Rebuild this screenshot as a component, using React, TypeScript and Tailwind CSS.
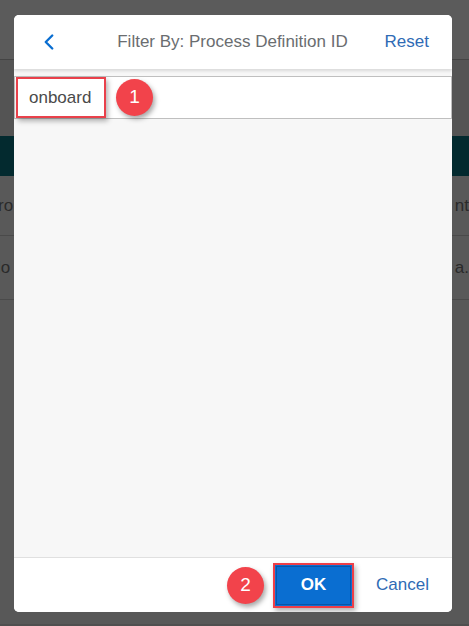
import { ChevronLeft } from 'lucide-react'

const font = { fontFamily: '"Liberation Sans", Arial, sans-serif' }

const Badge = ({ n }: { n: number }) => (
  <div className="flex h-[37px] w-[37px] items-center justify-center rounded-full bg-[#f2434b] text-[19px] text-white shadow-[2px_3px_5px_rgba(0,0,0,0.35)]">
    {n}
  </div>
)

export default function App() {
  return (
    <div className="relative h-[626px] w-[469px] overflow-hidden bg-[#4f4f4f]" style={font}>
      {/* dimmed page behind the dialog */}
      <div className="h-[60px] border-b border-[#444] bg-[#5b5b5b]" />
      <div className="h-[76px] bg-[#545454]" />
      <div className="h-[40px] bg-[#032a2f]" />
      <div className="flex h-[60px] items-center justify-between border-b border-[#4a4a4a] bg-[#595959] text-[17px] text-[#2a2a2a]">
        <span className="-ml-[2px]">ro</span>
        <span>nt</span>
      </div>
      <div className="flex h-[64px] items-center justify-between border-b border-[#4a4a4a] bg-[#595959] text-[17px] text-[#2a2a2a]">
        <span className="-ml-[3px]">lo</span>
        <span>a.</span>
      </div>
      <div className="h-[324px] bg-[#585858]" />

      {/* dialog */}
      <div className="absolute left-[14px] top-[15px] flex h-[597px] w-[438px] flex-col overflow-hidden rounded-[5px] bg-white">
        <div className="relative z-10 grid h-[54px] shrink-0 grid-cols-[1fr_auto_1fr] items-center bg-white pl-[22px] pr-[23px] shadow-[0_2px_3px_rgba(0,0,0,0.12)]">
          <ChevronLeft className="h-[26px] w-[26px] text-[#0a6ed1]" strokeWidth={2.2} />
          <div className="text-center text-[17px] text-[#6a6d70]">Filter By: Process Definition ID</div>
          <span className="justify-self-end text-[17px] text-[#2f6bb5]">Reset</span>
        </div>
        <div className="flex flex-1 flex-col bg-[#f7f7f7] pt-[7px]">
          <div className="relative flex h-[43px] items-center border border-[#bfbfbf] bg-white">
            <div className="ml-[1px] flex h-[41px] w-[90px] items-center border-2 border-[#e9414b] pl-[11px] text-[17px] text-[#4a4a4a] shadow-[2px_3px_5px_rgba(0,0,0,0.3)]">
              onboard
            </div>
            <div className="ml-[10px]">
              <Badge n={1} />
            </div>
          </div>
        </div>
        <div className="flex h-[55px] shrink-0 items-center justify-end border-t border-[#e0e0e0] bg-white pr-[23px]">
          <Badge n={2} />
          <div className="ml-[9px] flex h-[45px] w-[81px] items-center justify-center border-2 border-[#ee3f48] bg-[#0a6ed1] shadow-[2px_3px_5px_rgba(0,0,0,0.3)]">
            <div className="flex h-[39px] w-[75px] items-center justify-center border border-[#0856a8] text-[17px] font-bold text-white">
              OK
            </div>
          </div>
          <span className="ml-[22px] text-[17px] text-[#2f6bb5]">Cancel</span>
        </div>
      </div>
    </div>
  )
}
